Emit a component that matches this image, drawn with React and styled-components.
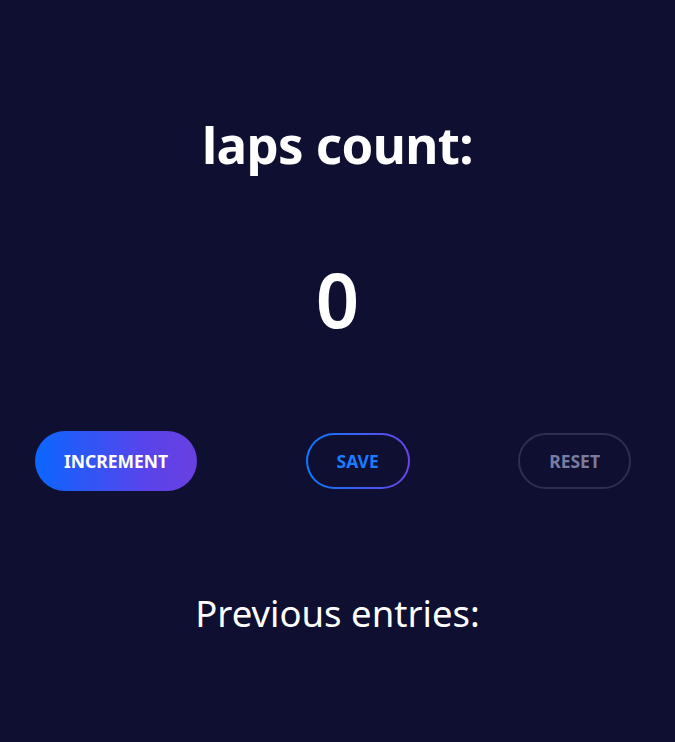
import React, { useState } from 'react';
import styled, { createGlobalStyle } from 'styled-components';

const GlobalStyle = createGlobalStyle`
  html, body {
    margin: 0;
    padding: 0;
    background: #0e0f31;
  }
  body {
    font-family: 'Noto Sans', 'Open Sans', sans-serif;
    color: #fff;
  }
`;

const Page = styled.main`
  min-height: 742px;
  display: flex;
  flex-direction: column;
  align-items: center;
  padding-top: 114px;
  box-sizing: border-box;
`;

const Title = styled.h1`
  margin: 0;
  font-size: 51px;
  font-weight: 700;
  line-height: 60px;
  letter-spacing: -0.6px;
`;

const Count = styled.div`
  margin-top: 80px;
  font-size: 76px;
  font-weight: 600;
  line-height: 90px;
`;

const Controls = styled.div`
  align-self: stretch;
  display: flex;
  justify-content: space-between;
  align-items: center;
  padding: 0 44px 0 35px;
  margin-top: 87px;
`;

const Button = styled.button`
  height: ${p => (p.$filled ? '60px' : '56px')};
  padding: 0 ${p => p.$pad || 28}px;
  border-radius: 30px;
  font-family: inherit;
  font-size: 17.5px;
  font-weight: 700;
  text-transform: uppercase;
  cursor: pointer;
  box-sizing: border-box;
`;

const Increment = styled(Button)`
  border: none;
  color: #fff;
  background: linear-gradient(90deg, #0b66ff 0%, #5a43ea 70%, #6940e0 100%);
`;

const Save = styled(Button)`
  border: 2px solid transparent;
  color: #1a7cff;
  background:
    linear-gradient(#0e0f31, #0e0f31) padding-box,
    linear-gradient(90deg, #0b7bff, #6a45e6) border-box;
`;

const Reset = styled(Button)`
  border: 2px solid #2d2e50;
  color: #7a7c9f;
  background: transparent;
`;

const Subtitle = styled.h2`
  margin: 100px 0 0;
  font-size: 36.5px;
  font-weight: 400;
  line-height: 44px;
`;

export default function App() {
  const [count, setCount] = useState(0);
  const [entries, setEntries] = useState([]);

  return (
    <>
      <GlobalStyle />
      <Page>
        <Title>laps count:</Title>
        <Count>{count}</Count>
        <Controls>
          <Increment $filled $pad={29} onClick={() => setCount(count + 1)}>
            Increment
          </Increment>
          <Save $pad={29} onClick={() => setEntries([...entries, count])}>
            Save
          </Save>
          <Reset $pad={29} onClick={() => setCount(0)}>
            Reset
          </Reset>
        </Controls>
        <Subtitle>Previous entries:</Subtitle>
      </Page>
    </>
  );
}
